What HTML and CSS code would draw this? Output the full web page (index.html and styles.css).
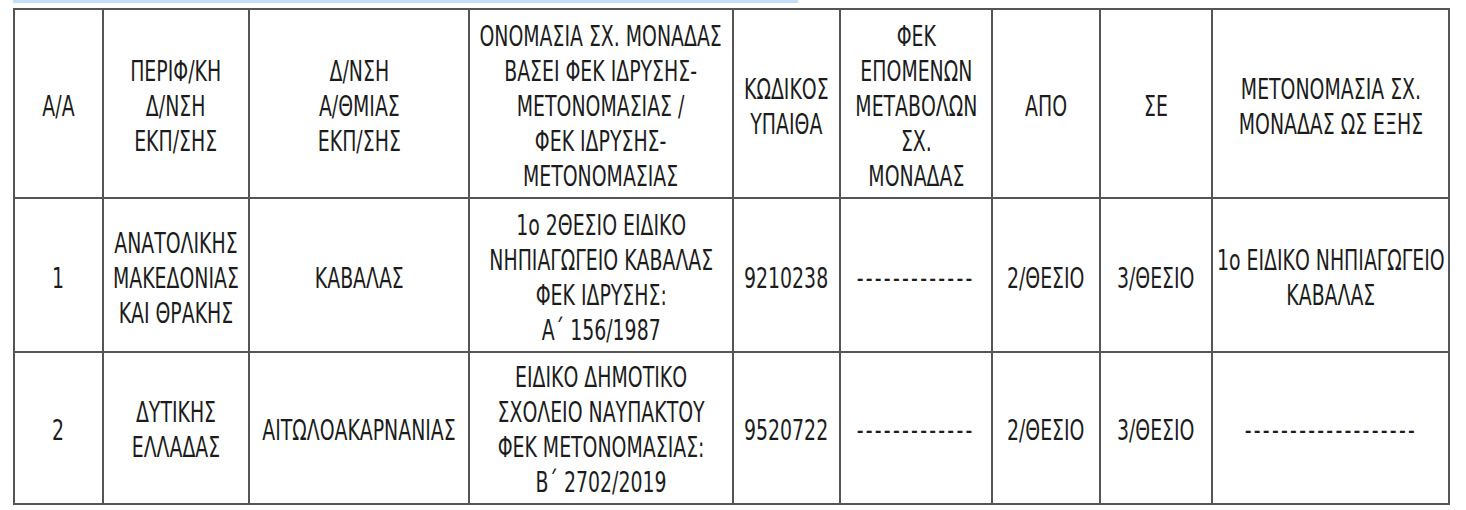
FILE: index.html
```html
<!DOCTYPE html>
<html lang="el">
<head>
<meta charset="utf-8">
<title>Πίνακας μετονομασίας</title>
<link rel="stylesheet" href="styles.css">
</head>
<body>
<div class="band"></div>
<table class="grid">
<colgroup>
<col class="c1"><col class="c2"><col class="c3"><col class="c4"><col class="c5"><col class="c6"><col class="c7"><col class="c8"><col class="c9">
</colgroup>
<tr class="head">
<td><div class="cell"><span class="t">Α/Α</span></div></td>
<td><div class="cell"><span class="t">ΠΕΡΙΦ/ΚΗ<br>Δ/ΝΣΗ<br>ΕΚΠ/ΣΗΣ</span></div></td>
<td><div class="cell"><span class="t">Δ/ΝΣΗ<br>Α/ΘΜΙΑΣ<br>ΕΚΠ/ΣΗΣ</span></div></td>
<td><div class="cell"><span class="t">ΟΝΟΜΑΣΙΑ ΣΧ. ΜΟΝΑΔΑΣ<br>ΒΑΣΕΙ ΦΕΚ ΙΔΡΥΣΗΣ-<br>ΜΕΤΟΝΟΜΑΣΙΑΣ /<br>ΦΕΚ ΙΔΡΥΣΗΣ-<br>ΜΕΤΟΝΟΜΑΣΙΑΣ</span></div></td>
<td><div class="cell"><span class="t">ΚΩΔΙΚΟΣ<br>ΥΠΑΙΘΑ</span></div></td>
<td><div class="cell"><span class="t">ΦΕΚ<br>ΕΠΟΜΕΝΩΝ<br>ΜΕΤΑΒΟΛΩΝ<br>ΣΧ.<br>ΜΟΝΑΔΑΣ</span></div></td>
<td><div class="cell"><span class="t">ΑΠΟ</span></div></td>
<td><div class="cell"><span class="t">ΣΕ</span></div></td>
<td><div class="cell"><span class="t">ΜΕΤΟΝΟΜΑΣΙΑ ΣΧ.<br>ΜΟΝΑΔΑΣ ΩΣ ΕΞΗΣ</span></div></td>
</tr>
<tr class="r1">
<td><div class="cell"><span class="t">1</span></div></td>
<td><div class="cell"><span class="t">ΑΝΑΤΟΛΙΚΗΣ<br>ΜΑΚΕΔΟΝΙΑΣ<br>ΚΑΙ ΘΡΑΚΗΣ</span></div></td>
<td><div class="cell"><span class="t">ΚΑΒΑΛΑΣ</span></div></td>
<td><div class="cell"><span class="t">1ο 2ΘΕΣΙΟ ΕΙΔΙΚΟ<br>ΝΗΠΙΑΓΩΓΕΙΟ ΚΑΒΑΛΑΣ<br>ΦΕΚ ΙΔΡΥΣΗΣ:<br>Α΄ 156/1987</span></div></td>
<td><div class="cell"><span class="t">9210238</span></div></td>
<td><div class="cell"><span class="t dash">-------------</span></div></td>
<td><div class="cell"><span class="t">2/ΘΕΣΙΟ</span></div></td>
<td><div class="cell"><span class="t">3/ΘΕΣΙΟ</span></div></td>
<td><div class="cell"><span class="t">1ο ΕΙΔΙΚΟ ΝΗΠΙΑΓΩΓΕΙΟ<br>ΚΑΒΑΛΑΣ</span></div></td>
</tr>
<tr class="r2">
<td><div class="cell"><span class="t">2</span></div></td>
<td><div class="cell"><span class="t">ΔΥΤΙΚΗΣ<br>ΕΛΛΑΔΑΣ</span></div></td>
<td><div class="cell"><span class="t">ΑΙΤΩΛΟΑΚΑΡΝΑΝΙΑΣ</span></div></td>
<td><div class="cell"><span class="t">ΕΙΔΙΚΟ ΔΗΜΟΤΙΚΟ<br>ΣΧΟΛΕΙΟ ΝΑΥΠΑΚΤΟΥ<br>ΦΕΚ ΜΕΤΟΝΟΜΑΣΙΑΣ:<br>Β΄ 2702/2019</span></div></td>
<td><div class="cell"><span class="t">9520722</span></div></td>
<td><div class="cell"><span class="t dash">-------------</span></div></td>
<td><div class="cell"><span class="t">2/ΘΕΣΙΟ</span></div></td>
<td><div class="cell"><span class="t">3/ΘΕΣΙΟ</span></div></td>
<td><div class="cell"><span class="t dash">-------------------</span></div></td>
</tr>
</table>
</body>
</html>
```
FILE: styles.css
```css
html, body {
  margin: 0;
  padding: 0;
  background: #ffffff;
}
body {
  font-family: "Liberation Sans Narrow", "DejaVu Sans Condensed", "Liberation Sans", sans-serif;
  color: #1c1c1c;
}
.band {
  margin-left: 13px;
  width: 785px;
  height: 3px;
  background: #c4ddf8;
  margin-bottom: 5px;
}
.grid {
  margin-left: 13px;
  border-collapse: collapse;
  table-layout: fixed;
  width: 1437px;
}
.grid td {
  border: 2px solid #555555;
  padding: 0;
  vertical-align: middle;
}
.c1 { width: 89px; }
.c2 { width: 146px; }
.c3 { width: 220px; }
.c4 { width: 264px; }
.c5 { width: 107px; }
.c6 { width: 152px; }
.c7 { width: 108px; }
.c8 { width: 112px; }
.c9 { width: 237px; }
.head { height: 189px; }
.r1 { height: 154px; }
.r2 { height: 152px; }
.cell {
  display: flex;
  justify-content: center;
  align-items: center;
  padding-top: 6px;
}
.r2 .cell {
  padding-top: 4px;
}
.t {
  display: inline-block;
  white-space: nowrap;
  text-align: center;
  font-size: 28px;
  line-height: 35px;
  transform: scaleX(0.75);
}
.t.dash {
  letter-spacing: 3px;
}
```
